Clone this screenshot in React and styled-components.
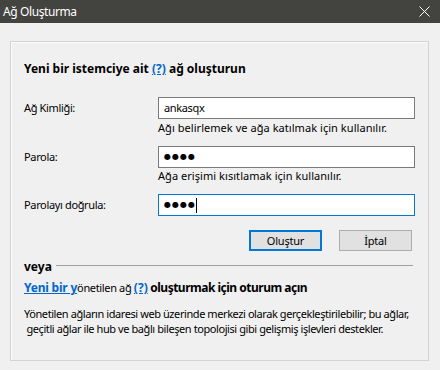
import React from "react";
import styled, { createGlobalStyle } from "styled-components";

const GlobalStyle = createGlobalStyle`
	html, body {
		margin: 0;
		padding: 0;
		background: #f0f0f0;
	}
	body {
		font-family: "Noto Sans", "DejaVu Sans", sans-serif;
		font-size: 11px;
		letter-spacing: -0.35px;
		color: #000;
	}
`;

const Window = styled.div`
	width: 440px;
	height: 370px;
	display: flex;
	flex-direction: column;
	background: #f0f0f0;
	overflow: hidden;
`;

const TitleBar = styled.div`
	height: 23px;
	flex: none;
	display: flex;
	align-items: center;
	justify-content: space-between;
	padding: 0 10px 0 3px;
	background: #43433f;
	color: #fff;
	font-size: 12px;
	line-height: 16px;
	letter-spacing: -0.4px;
`;

const CloseIcon = () => (
	<svg width='11' height='11' viewBox='0 0 11 11'>
		<path d='M0.5 0.5 L10.5 10.5 M10.5 0.5 L0.5 10.5' stroke='#fff' strokeWidth='1' fill='none' />
	</svg>
);

const Body = styled.div`
	flex: 1;
	padding: 18px 11px 9px 10px;
	display: flex;
	min-width: 0;
`;

const Panel = styled.div`
	flex: 1;
	min-width: 0;
	border: 1px solid #d3d3d3;
	box-shadow: inset 1px 1px 0 #fbfbfb;
	padding: 19px 13px 0 13px;
	line-height: 16px;
`;

const Heading = styled.div`
	font-size: 12px;
	font-weight: bold;
	letter-spacing: 0;
`;

const HelpLink = styled.a`
	color: #0066cc;
	font-size: 12px;
	font-weight: bold;
	letter-spacing: ${(p) => (p.$tight ? "-0.2px" : "0")};
	text-decoration: underline;
	cursor: pointer;
`;

const Form = styled.div`
	display: grid;
	grid-template-columns: 134px 257px;
	margin-top: 20px;
`;

const Label = styled.div`
	height: 22px;
	display: flex;
	align-items: center;
`;

const Field = styled.div`
	display: flex;
	flex-direction: column;
	margin-bottom: ${(p) => (p.$last ? "0" : "10px")};
`;

const TextBox = styled.div`
	box-sizing: border-box;
	height: 22px;
	background: #fff;
	border: 1px solid ${(p) => (p.$focused ? "#0078d7" : "#7a7a7a")};
	padding: 0 5px;
	display: flex;
	align-items: center;
	white-space: pre;
`;

const Dots = styled.span`
	font-family: "DejaVu Sans", sans-serif;
	font-size: 8px;
	letter-spacing: 1px;
`;

const Caret = styled.span`
	display: inline-block;
	width: 1px;
	height: 15px;
	background: #000;
`;

const Hint = styled.div`
	margin-top: ${(p) => p.$offset}px;
	white-space: nowrap;
	letter-spacing: 0.05px;
`;

const Actions = styled.div`
	display: flex;
	justify-content: flex-end;
	gap: 17px;
	margin: 14px 3px 0 0;
`;

const Button = styled.button`
	box-sizing: border-box;
	width: 73px;
	height: 21px;
	padding: 0;
	font-family: inherit;
	font-size: 11px;
	letter-spacing: -0.2px;
	color: #000;
	background: #e1e1e1;
	border: ${(p) => (p.$primary ? "2px solid #0078d7" : "1px solid #adadad")};
	cursor: pointer;
`;

const Separator = styled.div`
	display: flex;
	align-items: center;
	margin: 8px 2px 0 0;
	font-size: 12px;
	font-weight: bold;
	letter-spacing: 0;

	&::after {
		content: "";
		flex: 1;
		height: 1px;
		background: #a0a0a0;
		margin: -3px 0 0 4px;
	}
`;

const Managed = styled.div`
	margin-top: 5px;
	white-space: nowrap;
`;

const Strong = styled.span`
	font-size: 12px;
	font-weight: bold;
	letter-spacing: -0.5px;
`;

const Paragraph = styled.div`
	margin-top: 10px;
	line-height: 15px;
	white-space: pre;
	letter-spacing: -0.42px;
`;

const App = () => {
	return (
		<>
			<GlobalStyle />
			<Window>
				<TitleBar>
					<span>Ağ Oluşturma</span>
					<CloseIcon />
				</TitleBar>
				<Body>
					<Panel>
						<Heading>
							Yeni bir istemciye ait <HelpLink>(?)</HelpLink> ağ oluşturun
						</Heading>
						<Form>
							<Label>Ağ Kimliği:</Label>
							<Field>
								<TextBox>ankasqx</TextBox>
								<Hint $offset={1}>Ağı belirlemek ve ağa katılmak için kullanılır.</Hint>
							</Field>
							<Label>Parola:</Label>
							<Field>
								<TextBox>
									<Dots>●●●●</Dots>
								</TextBox>
								<Hint $offset={0}>Ağa erişimi kısıtlamak için kullanılır.</Hint>
							</Field>
							<Label>Parolayı doğrula:</Label>
							<Field $last>
								<TextBox $focused>
									<Dots>●●●●</Dots>
									<Caret />
								</TextBox>
							</Field>
						</Form>
						<Actions>
							<Button $primary>Oluştur</Button>
							<Button>İptal</Button>
						</Actions>
						<Separator>veya</Separator>
						<Managed>
							<HelpLink $tight>Yeni bir y</HelpLink>önetilen ağ <HelpLink>(?)</HelpLink>{" "}
							<Strong>oluşturmak için oturum açın</Strong>
						</Managed>
						<Paragraph>
							{"Yönetilen ağların idaresi web üzerinde merkezi olarak gerçekleştirilebilir; bu ağlar,\n geçitli ağlar ile hub ve bağlı bileşen topolojisi gibi gelişmiş işlevleri destekler."}
						</Paragraph>
					</Panel>
				</Body>
			</Window>
		</>
	);
};

export default App;
